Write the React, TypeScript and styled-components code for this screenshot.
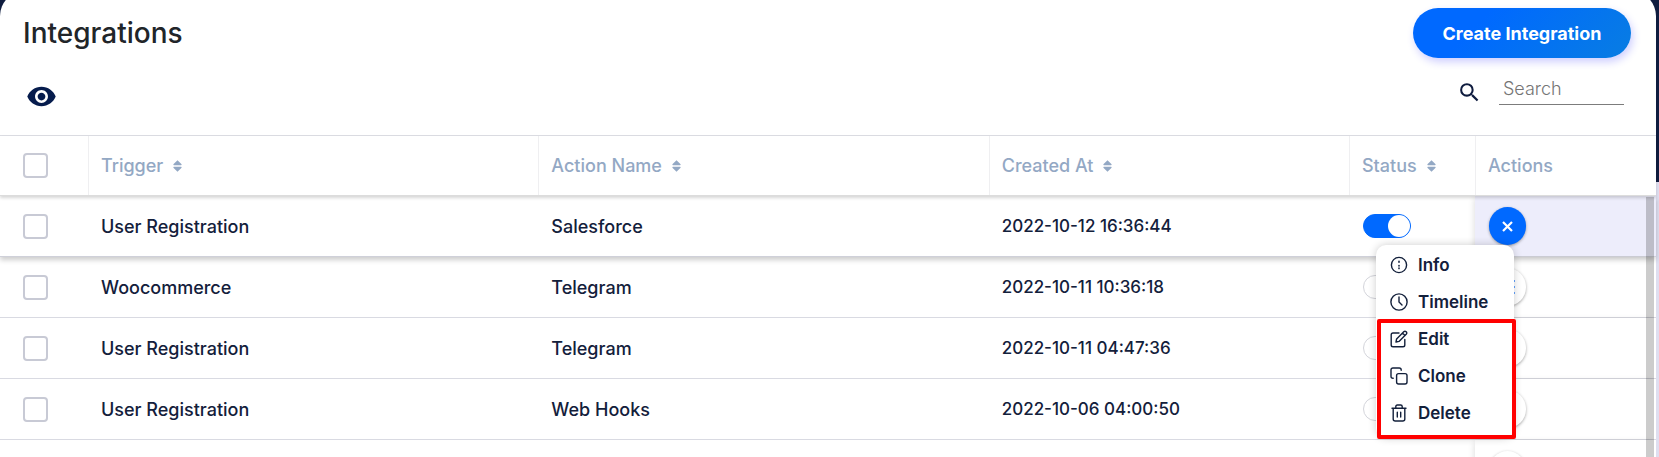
import React from "react";
import styled, { createGlobalStyle, css } from "styled-components";

const GlobalStyle = createGlobalStyle`
  * { box-sizing: border-box; }
  body {
    margin: 0;
    background: linear-gradient(#0f1c3f 182px, #dfdff0 182px);
    font-family: Inter, "Liberation Sans", sans-serif;
    color: #13203b;
  }
  button, input { font: inherit; }
`;

const Page = styled.div`
  height: 100vh;
  overflow: hidden;
  padding-right: 3px;
`;

const Card = styled.main`
  position: relative;
  min-height: calc(100vh + 9px);
  margin-top: -9px;
  padding-top: 9px;
  background: #fff;
  border-radius: 25px 25px 0 0;
`;

const TitleBar = styled.header`
  display: flex;
  align-items: center;
  justify-content: space-between;
  padding: 8px 25px 0 23px;
`;

const Title = styled.h1`
  margin: 0;
  font-size: 28px;
  line-height: 50px;
  font-weight: 500;
  color: #212529;
`;

const CreateButton = styled.button`
  height: 50px;
  width: 218px;
  padding: 0;
  border: 0;
  border-radius: 25px;
  background: linear-gradient(135deg, #0069ff 30%, #087de2);
  box-shadow: 2px 4px 8px #cfcfff;
  color: #fff;
  font-size: 18px;
  font-weight: 700;
`;

const Toolbar = styled.div`
  display: flex;
  align-items: center;
  justify-content: space-between;
  height: 77px;
  padding: 0 32px 0 26px;
`;

const IconButton = styled.button`
  display: flex;
  padding: 0;
  border: 0;
  background: none;
  color: #061c4d;
`;

const SearchLabel = styled.label`
  display: flex;
  align-items: center;
  gap: 17px;
  padding-bottom: 16px;
  color: #0f1c3f;

  svg { margin-top: 8px; }
`;

const SearchInput = styled.input`
  width: 125px;
  height: 32px;
  padding: 0 4px;
  border: 0;
  border-bottom: 1px solid #7c7c7c;
  background: none;
  font-size: 18px;
  font-weight: 300;

  &::placeholder { color: #757575; opacity: 1; }
`;

const Table = styled.table`
  display: block;
  border-top: 1px solid #dcdde3;

  thead, tbody { display: block; }
`;

const Row = styled.tr<{ $active?: boolean }>`
  display: grid;
  grid-template-columns: 88px 5fr 5fr 4fr 126px 181px;
  height: 61px;
  border-bottom: 1px solid #d9dae2;
  ${(p) => p.$active && css`
    position: relative;
    z-index: 1;
    border-bottom-color: #cfd0d9;
    box-shadow: 0 3px 5px rgba(0, 0, 0, 0.2);
  `}
`;

const HeadRow = styled(Row)`
  position: relative;
  z-index: 2;
  height: 60px;
  background: #fff;
  border-bottom: 1px solid #dcdcdc;
  box-shadow: 0 2px 3px rgba(0, 0, 0, 0.16);
`;

const HeadCell = styled.th`
  display: flex;
  align-items: center;
  gap: 10px;
  padding-left: 12px;
  border-left: 1px solid #efeff1;
  color: #93a8c4;
  font-size: 18px;
  font-weight: 500;

  &:first-child { border-left: 0; padding-left: 23px; }
`;

const Cell = styled.td`
  display: flex;
  align-items: center;
  padding: 0 0 0 13px;
  font-size: 18px;
  font-weight: 500;

  &:first-child { padding-left: 23px; }
`;

const DateCell = styled(Cell)`
  font-size: 17px;
`;

const SwitchCell = styled(Cell)`
  padding-left: 14px;
`;

const ActionCell = styled(Cell)<{ $active?: boolean }>`
  position: relative;
  padding-left: 14px;
  background: ${(p) => (p.$active ? "#ededfb" : "#fff")};
  box-shadow: -3px 0 6px -2px rgba(0, 0, 0, 0.12);
`;

const Checkbox = styled.input.attrs({ type: "checkbox" })`
  appearance: none;
  width: 25px;
  height: 25px;
  margin: 0;
  border: 2px solid #c8cad5;
  border-radius: 4px;
  background: #fff;
`;

const Switch = styled.input.attrs({ type: "checkbox", role: "switch" })`
  appearance: none;
  display: flex;
  width: 48px;
  height: 24px;
  margin: 0;
  padding: 0;
  border: 1px solid #d4d5db;
  border-radius: 12px;
  background: #fff;

  &:checked {
    justify-content: flex-end;
    border-color: #0069ff;
    background: #0069ff;
  }
  &:checked::before {
    content: "";
    width: 22px;
    height: 22px;
    border-radius: 11px;
    background: #fff;
  }
`;

const RoundButton = styled.button<{ $active?: boolean }>`
  display: flex;
  align-items: center;
  justify-content: center;
  width: 37px;
  height: 38px;
  padding: 0;
  border: 0;
  border-radius: 19px;
  background: ${(p) => (p.$active ? "#0069ff" : "#fff")};
  color: ${(p) => (p.$active ? "#fff" : "#0069ff")};
  box-shadow: 0 1px 3px rgba(0, 0, 0, 0.35);
`;

const Menu = styled.ul`
  position: absolute;
  top: 49px;
  right: 142px;
  width: 138px;
  height: 193px;
  margin: 0;
  padding: 1px 0 0;
  border-radius: 10px;
  background: #fff;
  box-shadow: 0 0 8px rgba(0, 0, 0, 0.2);
  list-style: none;
`;

const MenuItem = styled.button`
  display: flex;
  align-items: center;
  gap: 10px;
  width: 100%;
  height: 37px;
  padding: 0 0 0 14px;
  border: 0;
  background: none;
  color: #13203b;
  font-size: 17px;
  font-weight: 600;
`;

const Highlight = styled.div`
  position: absolute;
  top: 74px;
  left: 1px;
  width: 139px;
  height: 120px;
  border: 4px solid #ff0000;
  border-radius: 2px;
  pointer-events: none;
`;

const Scrollbar = styled.div`
  position: absolute;
  z-index: 1;
  top: 206px;
  right: 2px;
  bottom: 0;
  width: 8px;
  background: rgba(0, 0, 0, 0.2);
`;

const EyeIcon = () => (
  <svg width="31" height="31" viewBox="0 0 24 24" fill="currentColor" aria-hidden="true">
    <path d="M12 4.5C7 4.5 2.73 7.61 1 12c1.73 4.39 6 7.5 11 7.5s9.27-3.11 11-7.5c-1.73-4.39-6-7.5-11-7.5zM12 17c-2.76 0-5-2.24-5-5s2.24-5 5-5 5 2.24 5 5-2.24 5-5 5zm0-8c-1.66 0-3 1.34-3 3s1.34 3 3 3 3-1.34 3-3-1.34-3-3-3z" />
  </svg>
);

const SearchIcon = () => (
  <svg width="25" height="25" viewBox="0 0 24 24" fill="currentColor" aria-hidden="true">
    <path d="M15.5 14h-.79l-.28-.27A6.471 6.471 0 0 0 16 9.5 6.5 6.5 0 1 0 9.5 16c1.61 0 3.09-.59 4.23-1.57l.27.28v.79l5 4.99L20.49 19l-4.99-5zm-6 0C7.01 14 5 11.99 5 9.5S7.01 5 9.5 5 14 7.01 14 9.5 11.99 14 9.5 14z" />
  </svg>
);

const SortIcon = () => (
  <svg width="9" height="12" viewBox="0 0 9 12" fill="currentColor" aria-hidden="true">
    <path d="M4.5 0.3 8.6 4.2Q8.8 5.2 8 5.2H1Q0.2 5.2 0.4 4.2ZM4.5 11.7 8.6 7.8Q8.8 6.8 8 6.8H1Q0.2 6.8 0.4 7.8Z" />
  </svg>
);

const CloseIcon = () => (
  <svg width="11" height="11" viewBox="0 0 11 11" stroke="currentColor" strokeWidth="2.2" aria-hidden="true">
    <path d="M1 1 10 10M10 1 1 10" />
  </svg>
);

const MoreIcon = () => (
  <svg width="17" height="16" viewBox="0 0 17 16" stroke="currentColor" strokeWidth="2" opacity="0.6" aria-hidden="true">
    <path d="M1 2H16M1 8H16M1 14H16" />
  </svg>
);

const MenuIcon = ({ children }: { children: React.ReactNode }) => (
  <svg width="18" height="18" viewBox="0 0 18 18" fill="none" stroke="currentColor" strokeWidth="1.4" strokeLinecap="round" strokeLinejoin="round" aria-hidden="true">
    {children}
  </svg>
);

const menu = [
  { label: "Info", icon: <><circle cx="9" cy="9" r="7.6" /><path d="M9 5.4v.8M9 9.6v.4M9 12v.6" strokeWidth="1.6" /></> },
  { label: "Timeline", icon: <><circle cx="9" cy="9" r="8.1" /><path d="M9 4v5l3 3" /></> },
  { label: "Edit", icon: <><path d="M9 3H3Q1.2 3 1.2 4.8V15Q1.2 16.8 3 16.8H13Q14.8 16.8 14.8 15V9.5" /><path d="M6 12 6.6 9 14 1.6Q15 .8 16.2 1.8 17.2 3 16.4 4L9 11.4ZM12.5 3.1 15 5.5" /></> },
  { label: "Clone", icon: <><rect x="6.6" y="6.6" width="10.4" height="10.4" rx="2" /><path d="M3.2 11.2H3Q1 11.2 1 9.2V3Q1 1 3 1H9.2Q11.2 1 11.2 3V3.2" /></> },
  { label: "Delete", icon: <><path d="M2 4.2H16M5.8 4V2.6Q5.8 1 7.4 1H10.6Q12.2 1 12.2 2.6V4M3.2 4.4V15Q3.2 17 5.2 17H12.8Q14.8 17 14.8 15V4.4M7.3 8.3V13M10.7 8.3V13" /></> },
];

const rows = [
  { trigger: "User Registration", action: "Salesforce", created: "2022-10-12 16:36:44", active: true },
  { trigger: "Woocommerce", action: "Telegram", created: "2022-10-11 10:36:18" },
  { trigger: "User Registration", action: "Telegram", created: "2022-10-11 04:47:36" },
  { trigger: "User Registration", action: "Web Hooks", created: "2022-10-06 04:00:50" },
  { trigger: "", action: "", created: "" },
];

export default function App() {
  return (
    <Page>
      <GlobalStyle />
      <Card>
        <TitleBar>
          <Title>Integrations</Title>
          <CreateButton type="button">Create Integration</CreateButton>
        </TitleBar>
        <Toolbar>
          <IconButton type="button" aria-label="Show columns"><EyeIcon /></IconButton>
          <SearchLabel>
            <SearchIcon />
            <SearchInput type="search" placeholder="Search" aria-label="Search" />
          </SearchLabel>
        </Toolbar>
        <Table>
          <thead>
            <HeadRow>
              <HeadCell><Checkbox aria-label="Select all" /></HeadCell>
              {["Trigger", "Action Name", "Created At", "Status"].map((name) => (
                <HeadCell key={name}>{name}<SortIcon /></HeadCell>
              ))}
              <HeadCell>Actions</HeadCell>
            </HeadRow>
          </thead>
          <tbody>
            {rows.map((row, i) => (
              <Row key={i} $active={row.active}>
                <Cell><Checkbox aria-label="Select row" /></Cell>
                <Cell>{row.trigger}</Cell>
                <Cell>{row.action}</Cell>
                <DateCell>{row.created}</DateCell>
                <SwitchCell><Switch defaultChecked={row.active} aria-label="Status" /></SwitchCell>
                <ActionCell $active={row.active}>
                  <RoundButton type="button" $active={row.active} aria-label="Row actions">
                    {row.active ? <CloseIcon /> : <MoreIcon />}
                  </RoundButton>
                  {row.active && (
                    <Menu>
                      {menu.map((item) => (
                        <li key={item.label}>
                          <MenuItem type="button"><MenuIcon>{item.icon}</MenuIcon>{item.label}</MenuItem>
                        </li>
                      ))}
                      <Highlight as="li" aria-hidden="true" />
                    </Menu>
                  )}
                </ActionCell>
              </Row>
            ))}
          </tbody>
        </Table>
        <Scrollbar />
      </Card>
    </Page>
  );
}
